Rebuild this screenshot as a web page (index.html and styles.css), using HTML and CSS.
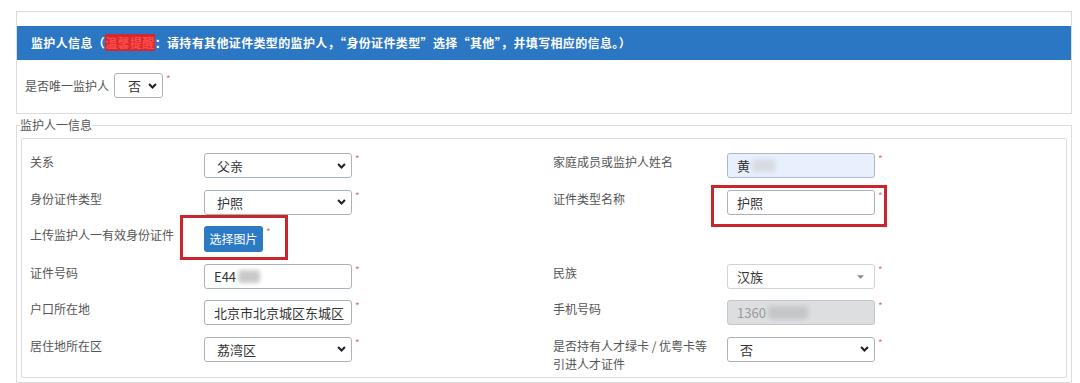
FILE: index.html
```html
<!DOCTYPE html>
<html lang="zh-CN">
<head>
<meta charset="utf-8">
<title>监护人信息</title>
<link rel="stylesheet" href="styles.css">
</head>
<body>
<div class="panel">
  <div class="panel-head">监护人信息（<span class="warn">温馨提醒</span>：请持有其他证件类型的监护人，“身份证件类型”选择“其他”，并填写相应的信息。）</div>
  <div class="only-row">
    <span class="lbl">是否唯一监护人</span>
    <div class="sel sel-small"><span class="val">否</span><svg class="chev" viewBox="0 0 10 7" width="9" height="6"><path d="M1 1.2 L5 5.2 L9 1.2" fill="none" stroke="#222" stroke-width="2.4"/></svg></div>
    <span class="req">*</span>
  </div>
</div>

<fieldset class="group">
  <legend>监护人一信息</legend>
  <div class="inner">
    <div class="grid">
      <div class="cell">
        <span class="lbl">关系</span>
        <div class="sel"><span class="val">父亲</span><svg class="chev" viewBox="0 0 10 7" width="9" height="6"><path d="M1 1.2 L5 5.2 L9 1.2" fill="none" stroke="#222" stroke-width="2.4"/></svg></div>
        <span class="req">*</span>
      </div>
      <div class="cell">
        <span class="lbl">家庭成员或监护人姓名</span>
        <div class="inp inp-auto">黄<span class="blur blur-name"></span></div>
        <span class="req">*</span>
      </div>

      <div class="cell">
        <span class="lbl">身份证件类型</span>
        <div class="sel"><span class="val">护照</span><svg class="chev" viewBox="0 0 10 7" width="9" height="6"><path d="M1 1.2 L5 5.2 L9 1.2" fill="none" stroke="#222" stroke-width="2.4"/></svg></div>
        <span class="req">*</span>
      </div>
      <div class="cell">
        <span class="lbl">证件类型名称</span>
        <div class="wrap">
          <div class="inp">护照</div>
          <div class="mark mark-name"></div>
        </div>
        <span class="req">*</span>
      </div>

      <div class="cell">
        <span class="lbl">上传监护人一有效身份证件</span>
        <div class="wrap">
          <button class="btn" type="button">选择图片</button>
          <div class="mark mark-upload"></div>
        </div>
        <span class="req">*</span>
      </div>
      <div class="cell"></div>

      <div class="cell">
        <span class="lbl">证件号码</span>
        <div class="inp">E44<span class="blur blur-id"></span></div>
        <span class="req">*</span>
      </div>
      <div class="cell">
        <span class="lbl">民族</span>
        <div class="sel sel2"><span class="val val2">汉族</span><svg class="tri" viewBox="0 0 8 4" width="7" height="4"><path d="M0 0 L8 0 L4 4 Z" fill="#888"/></svg></div>
        <span class="req">*</span>
      </div>

      <div class="cell">
        <span class="lbl">户口所在地</span>
        <div class="inp inp-clip">北京市北京城区东城区</div>
        <span class="req">*</span>
      </div>
      <div class="cell">
        <span class="lbl">手机号码</span>
        <div class="inp inp-dis">1360<span class="blur blur-phone"></span></div>
        <span class="req">*</span>
      </div>

      <div class="cell">
        <span class="lbl">居住地所在区</span>
        <div class="sel"><span class="val">荔湾区</span><svg class="chev" viewBox="0 0 10 7" width="9" height="6"><path d="M1 1.2 L5 5.2 L9 1.2" fill="none" stroke="#222" stroke-width="2.4"/></svg></div>
        <span class="req">*</span>
      </div>
      <div class="cell">
        <span class="lbl">是否持有人才绿卡 / 优粤卡等引进人才证件</span>
        <div class="sel"><span class="val val3">否</span><svg class="chev" viewBox="0 0 10 7" width="9" height="6"><path d="M1 1.2 L5 5.2 L9 1.2" fill="none" stroke="#222" stroke-width="2.4"/></svg></div>
        <span class="req">*</span>
      </div>
    </div>
  </div>
</fieldset>
</body>
</html>
```

FILE: styles.css
```css
* { box-sizing: border-box; }

body {
  margin: 0;
  padding: 11px 8px 0 16px;
  background: #fff;
  font-family: "Microsoft YaHei", "Noto Sans CJK SC", "Noto Sans", sans-serif;
  font-size: 12px;
  color: #555;
}

.panel {
  border: 1px solid #dcdcdc;
  padding-top: 14px;
}

.panel-head {
  height: 34px;
  background: #2c77c3;
  color: #fff;
  font-weight: bold;
  font-size: 12px;
  letter-spacing: 0.36px;
  line-height: 34px;
  padding-left: 14px;
  white-space: nowrap;
}

.warn {
  color: #ff4a4a;
  background: #d42a2f;
}

.only-row {
  display: flex;
  align-items: center;
  padding: 13px 8px 15px;
}

.only-row .lbl {
  margin-right: 5px;
  line-height: 18px;
}

.lbl {
  color: #555;
  line-height: 18px;
}

.sel,
.inp {
  position: relative;
  height: 25px;
  width: 148px;
  border: 1px solid #aab2bc;
  border-radius: 3px;
  background: #fff;
  color: #333;
  font-size: 13px;
  line-height: 23px;
  display: flex;
  align-items: center;
  white-space: nowrap;
  overflow: hidden;
}

.sel { padding: 0 5px 0 12px; }
.sel .val { flex: 1; }
.sel .chev { flex: none; }

.sel-small {
  width: 49px;
  padding-left: 13px;
  padding-right: 5px;
}

.sel2 { border-color: #cfd4d9; padding-right: 10px; padding-left: 9px; }
.sel2 .tri { flex: none; margin-top: 2px; }

.inp { padding: 0 6px 0 9px; }

.inp-auto {
  background: #e8f0fe;
  border-color: #a9b9d2;
}

.inp-dis {
  background: #dcdee0;
  border-color: #c3c7cb;
  color: #9a9a9a;
}

.blur {
  display: inline-block;
  height: 13px;
  background: #c9c9c9;
  filter: blur(2px);
  border-radius: 4px;
}
.blur-name { width: 24px; margin-left: 2px; background: #d8dbe2; }
.blur-id { width: 22px; margin-left: 2px; }
.blur-phone { width: 40px; margin-left: 2px; background: #c4c6c8; }

.req {
  align-self: flex-start;
  color: #e07070;
  font-size: 10px;
  line-height: 10px;
  margin-left: 3px;
  margin-top: 1px;
}

.group {
  margin: 2px 0 0;
  padding: 0 4px 4px;
  border: 1px solid #dcdcdc;
  min-width: 0;
}

.group legend {
  padding: 0;
  margin-left: -1px;
  line-height: 18px;
  font-size: 12px;
  color: #555;
}

.inner {
  margin-top: 4px;
  border: 1px solid #dcdcdc;
  border-radius: 2px;
  padding: 14px 8px 4px;
}

.grid {
  display: grid;
  grid-template-columns: 523px 1fr;
  row-gap: 11.6px;
}

.cell {
  display: flex;
  align-items: flex-start;
  min-height: 25px;
}

.cell .lbl {
  width: 174px;
  flex: none;
  padding-right: 10px;
}

.wrap { position: relative; }

.btn {
  display: block;
  height: 26px;
  width: 59px;
  padding: 0;
  border: none;
  border-radius: 3px;
  background: #2d7ac4;
  color: #fff;
  font-family: inherit;
  font-size: 12px;
  line-height: 26px;
  text-align: center;
}

.mark {
  position: absolute;
  border: 3px solid #c9252c;
  pointer-events: none;
}

.mark-upload {
  left: -24px;
  top: -11px;
  width: 108px;
  height: 45px;
}

.mark-name {
  left: -16px;
  top: -5px;
  width: 176px;
  height: 42px;
}
```
